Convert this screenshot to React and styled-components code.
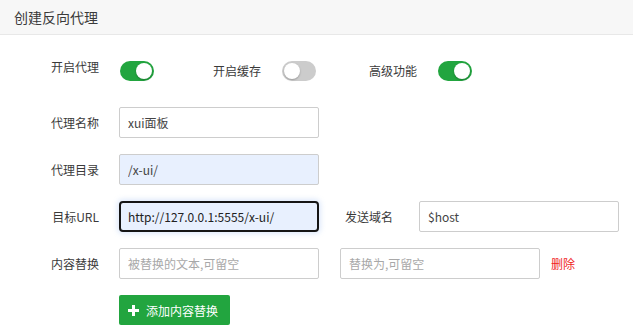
import React from 'react'
import styled, { createGlobalStyle } from 'styled-components'

const GlobalStyle = createGlobalStyle`
  html, body {
    margin: 0;
    padding: 0;
    background: #fff;
    font-family: "Noto Sans CJK SC", "Noto Sans", sans-serif;
    font-size: 12px;
    color: #3a3a3a;
  }
`

const Panel = styled.div`
  width: 633px;
  height: 336px;
  overflow: hidden;
  background: #fff;
`

const Header = styled.div`
  height: 34px;
  padding-left: 14px;
  display: flex;
  align-items: center;
  background: #f7f7f7;
  border-bottom: 1px solid #e8e8e8;
  font-size: 14px;
  color: #3a3a3a;
`

const Body = styled.div`
  padding-top: 26px;
  display: flex;
  flex-direction: column;
  gap: 16px;
`

const Row = styled.div`
  display: flex;
  align-items: center;
  height: ${p => p.h || 31}px;
  margin-bottom: ${p => p.mb || 0}px;
`

const Label = styled.div`
  width: ${p => p.w || 99}px;
  text-align: right;
  margin-left: ${p => p.ml || 0}px;
  margin-right: ${p => p.mr || 20}px;
  white-space: nowrap;
  color: #3a3a3a;
  align-self: ${p => (p.top ? 'flex-start' : 'center')};
  line-height: 20px;
  margin-top: ${p => (p.top ? '-4px' : '0')};
`

const Toggle = styled.div`
  position: relative;
  width: 34px;
  height: 20px;
  border-radius: 10px;
  background: ${p => (p.on ? '#22a53f' : '#cccccc')};
  flex-shrink: 0;
  &::after {
    content: '';
    position: absolute;
    top: 2px;
    left: ${p => (p.on ? '16px' : '2px')};
    width: 16px;
    height: 16px;
    border-radius: 50%;
    background: #fff;
    box-shadow: 0 1px 2px rgba(0, 0, 0, 0.25);
  }
`

const Input = styled.input`
  box-sizing: border-box;
  width: 200px;
  height: 31px;
  margin: 0 0 0 ${p => p.ml || 0}px;
  padding: 0 8px;
  font-family: inherit;
  font-size: 12px;
  color: #444;
  border: 1px solid #cdcdcd;
  border-radius: 2px;
  background: ${p => (p.filled ? '#e8f0fe' : '#fff')};
  outline: none;
  flex-shrink: 0;
  &::placeholder {
    color: #a8a8a8;
  }
  ${p =>
    p.focused &&
    `
    border: 2px solid #151515;
    border-radius: 4px;
    padding: 0 7px;
    color: #222;
    box-shadow: 0 0 5px 2px rgba(130, 170, 240, 0.25);
  `}
`

const DangerLink = styled.span`
  color: #f01d1d;
  margin-left: 11px;
  white-space: nowrap;
`

const AddButton = styled.button`
  display: flex;
  align-items: center;
  gap: 7px;
  height: 30px;
  width: 111px;
  margin-left: 119px;
  padding: 0 0 0 9px;
  border: none;
  border-radius: 2px;
  background: #22a53f;
  color: #fff;
  font-family: inherit;
  font-size: 12px;
  cursor: pointer;
`

const Plus = () => (
  <svg width="11" height="11" viewBox="0 0 11 11">
    <rect x="4" y="0" width="3" height="11" fill="#fff" />
    <rect x="0" y="4" width="11" height="3" fill="#fff" />
  </svg>
)

export default function App() {
  return (
    <>
      <GlobalStyle />
      <Panel>
        <Header>创建反向代理</Header>
        <Body>
          <Row h={20} mb={10}>
            <Label top mr={21}>开启代理</Label>
            <Toggle on />
            <Label w={48} ml={59} mr={21}>开启缓存</Label>
            <Toggle />
            <Label w={48} ml={53} mr={21}>高级功能</Label>
            <Toggle on />
          </Row>
          <Row>
            <Label>代理名称</Label>
            <Input defaultValue="xui面板" />
          </Row>
          <Row>
            <Label>代理目录</Label>
            <Input filled defaultValue="/x-ui/" />
          </Row>
          <Row>
            <Label>目标URL</Label>
            <Input filled focused defaultValue="http://127.0.0.1:5555/x-ui/" />
            <Label w={48} ml={26} mr={26}>发送域名</Label>
            <Input defaultValue="$host" />
          </Row>
          <Row>
            <Label>内容替换</Label>
            <Input placeholder="被替换的文本,可留空" />
            <Input ml={21} placeholder="替换为,可留空" />
            <DangerLink>删除</DangerLink>
          </Row>
          <AddButton>
            <Plus />
            添加内容替换
          </AddButton>
        </Body>
      </Panel>
    </>
  )
}
